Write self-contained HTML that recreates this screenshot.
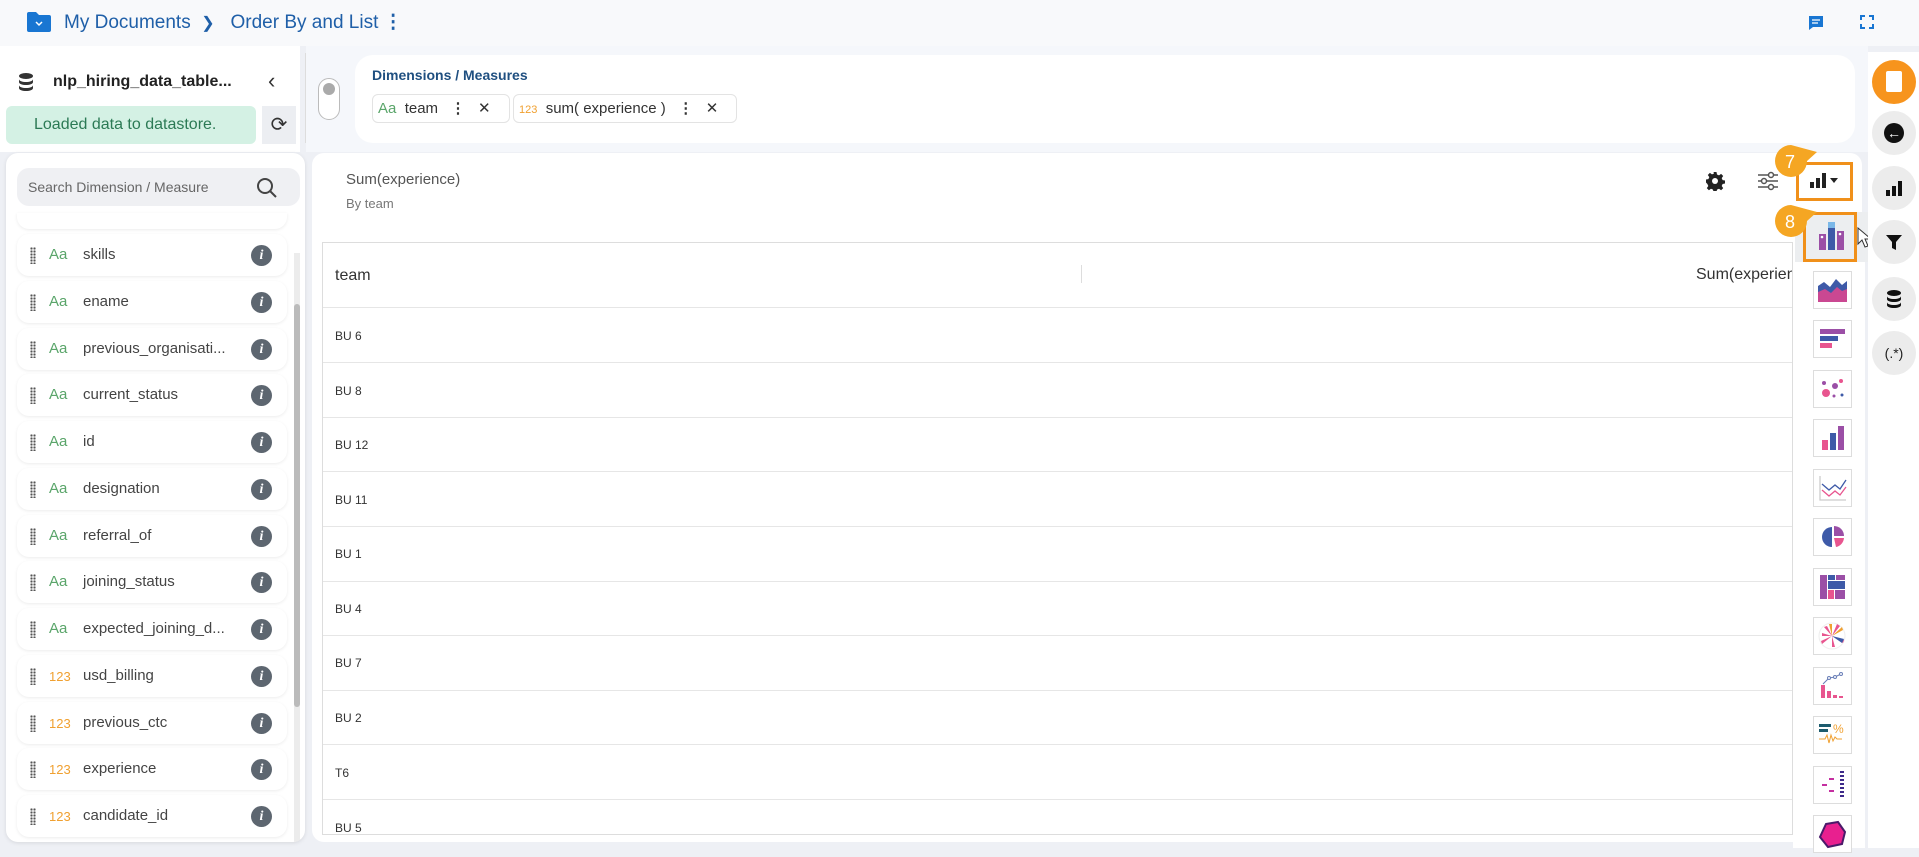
<!DOCTYPE html>
<html><head><meta charset="utf-8"><style>
*{box-sizing:border-box;margin:0;padding:0}
body{width:1919px;height:848px;overflow:hidden;background:#eef0f5;font-family:"Liberation Sans",sans-serif;position:relative;color:#333}
.abs{position:absolute}
.item{position:absolute;left:17px;width:270px;height:42px;background:#fff;border-radius:12px;box-shadow:0 1px 3px rgba(0,0,0,.08)}
.item .g{position:absolute;left:13px;top:13px;width:6px;height:17px;background:radial-gradient(circle,#555 1px,transparent 1.3px) 0 0/3px 3px}
.item .t{position:absolute;left:32px;top:12px;font-size:15px;color:#5aa56a}
.item .t.n{color:#f0a030;font-size:13px;top:14px}
.item .l{position:absolute;left:66px;top:12px;font-size:15px;color:#444}
.item .i{position:absolute;left:234px;top:11px;width:21px;height:21px;border-radius:50%;background:#5d6670;color:#fff;font:italic bold 14px "Liberation Serif",serif;text-align:center;line-height:21px}
.row{position:absolute;left:0;width:1471px;height:1px;background:#e6e6e6}
.rt{position:absolute;left:12px;font-size:12px;color:#333}
.ci{position:absolute;left:1813px;width:39px;height:38px;background:#fff;border:1px solid #ddd}
.rb{position:absolute;left:1872px;width:44px;height:44px;border-radius:50%;background:#ececec}
</style></head><body>
<div class="abs" style="left:0;top:0;width:1919px;height:46px;background:#f8f9fb"></div>
<svg class="abs" style="left:26px;top:11px" width="26" height="22"><path d="M1 3a2 2 0 0 1 2-2h7l3 3h10a2 2 0 0 1 2 2v13a2 2 0 0 1-2 2H3a2 2 0 0 1-2-2z" fill="#1976d2"/><path d="M10 11l3 3 3-3" stroke="#fff" stroke-width="1.5" fill="none"/></svg>
<div class="abs" style="left:64px;top:11px;font-size:19px;color:#1f5fa8">My Documents &nbsp;<span style="font-size:16px">&#10095;</span>&nbsp;&nbsp; Order By and List <b>&#8942;</b></div>
<svg class="abs" style="left:1807px;top:14px" width="18" height="18"><path d="M2 2h14v11H6l-4 3z" fill="#1976d2"/><path d="M5 6h8M5 9h6" stroke="#fff" stroke-width="1.3"/></svg>
<svg class="abs" style="left:1860px;top:15px" width="14" height="14" fill="none" stroke="#1976d2" stroke-width="2"><path d="M1 5V1h4M9 1h4v4M13 9v4H9M5 13H1V9"/></svg>
<div class="abs" style="left:0;top:46px;width:300px;height:106px;background:#fff"></div>
<svg class="abs" style="left:18px;top:72px" width="16" height="20"><ellipse cx="8" cy="4" rx="7" ry="3" fill="#333"/><path d="M1 7c0 4 14 4 14 0v3c0 4-14 4-14 0zM1 13c0 4 14 4 14 0v3c0 4-14 4-14 0z" fill="#333"/></svg>
<div class="abs" style="left:53px;top:73px;font-size:16px;font-weight:bold;color:#222">nlp_hiring_data_table...</div>
<div class="abs" style="left:268px;top:68px;font-size:22px;color:#333">&#8249;</div>
<div class="abs" style="left:6px;top:106px;width:250px;height:38px;background:#d4f1e4;border-radius:6px;color:#2c7a55;font-size:16px;line-height:38px;padding-left:28px">Loaded data to datastore.</div>
<div class="abs" style="left:262px;top:106px;width:34px;height:38px;background:#eceef2;font-size:20px;text-align:center;line-height:38px">&#10227;</div>
<div class="abs" style="left:305px;top:53px;width:1px;height:90px;background:#ddd"></div>
<div class="abs" style="left:306px;top:46px;width:1562px;height:106px;background:#f5f7fb"></div>
<div class="abs" style="left:318px;top:78px;width:22px;height:42px;border:1px solid #bbb;border-radius:11px;background:#fff"></div>
<div class="abs" style="left:323px;top:83px;width:12px;height:12px;border-radius:50%;background:#aaa"></div>
<div class="abs" style="left:355px;top:55px;width:1500px;height:88px;background:#fff;border-radius:18px"></div>
<div class="abs" style="left:372px;top:67px;font-size:14px;font-weight:bold;color:#1f4f80">Dimensions / Measures</div>
<div class="abs" style="left:372px;top:94px;width:138px;height:29px;border:1px solid #e3e3e3;border-radius:6px;font-size:15px;line-height:27px;padding-left:5px"><span style="color:#5aa56a">Aa</span>&nbsp; team &nbsp;&nbsp;<b>&#8942;</b>&nbsp;&nbsp; &#10005;</div>
<div class="abs" style="left:513px;top:94px;width:224px;height:29px;border:1px solid #e3e3e3;border-radius:6px;font-size:15px;line-height:27px;padding-left:5px"><span style="color:#f0a030;font-size:11px">123</span>&nbsp; sum( experience ) &nbsp;&nbsp;<b>&#8942;</b>&nbsp;&nbsp; &#10005;</div>
<div class="abs" style="left:6px;top:153px;width:299px;height:689px;background:#fff;border-radius:12px;box-shadow:0 1px 4px rgba(0,0,0,.1);overflow:hidden">
<div class="abs" style="left:11px;top:15px;width:283px;height:38px;background:#eff0f3;border-radius:12px;font-size:14px;color:#666;line-height:38px;padding-left:11px">Search Dimension / Measure</div>
<svg class="abs" style="left:250px;top:24px" width="22" height="22" fill="none" stroke="#444" stroke-width="2"><circle cx="9" cy="9" r="7"/><path d="M14 14l6 6"/></svg>
<div class="abs" style="left:288px;top:100px;width:6px;height:589px;background:#ececec"></div>
<div class="abs" style="left:288px;top:151px;width:6px;height:403px;background:#bbb;border-radius:3px"></div>
<div class="abs" style="left:11px;top:60px;width:270px;height:16px;background:#fff;border-radius:0 0 12px 12px;box-shadow:0 1px 3px rgba(0,0,0,.08)"></div>
</div>
<div class="item" style="top:234px"><i class="g"></i><span class="t">Aa</span><span class="l">skills</span><span class="i">i</span></div>
<div class="item" style="top:281px"><i class="g"></i><span class="t">Aa</span><span class="l">ename</span><span class="i">i</span></div>
<div class="item" style="top:328px"><i class="g"></i><span class="t">Aa</span><span class="l">previous_organisati...</span><span class="i">i</span></div>
<div class="item" style="top:374px"><i class="g"></i><span class="t">Aa</span><span class="l">current_status</span><span class="i">i</span></div>
<div class="item" style="top:421px"><i class="g"></i><span class="t">Aa</span><span class="l">id</span><span class="i">i</span></div>
<div class="item" style="top:468px"><i class="g"></i><span class="t">Aa</span><span class="l">designation</span><span class="i">i</span></div>
<div class="item" style="top:515px"><i class="g"></i><span class="t">Aa</span><span class="l">referral_of</span><span class="i">i</span></div>
<div class="item" style="top:561px"><i class="g"></i><span class="t">Aa</span><span class="l">joining_status</span><span class="i">i</span></div>
<div class="item" style="top:608px"><i class="g"></i><span class="t">Aa</span><span class="l">expected_joining_d...</span><span class="i">i</span></div>
<div class="item" style="top:655px"><i class="g"></i><span class="t n">123</span><span class="l">usd_billing</span><span class="i">i</span></div>
<div class="item" style="top:702px"><i class="g"></i><span class="t n">123</span><span class="l">previous_ctc</span><span class="i">i</span></div>
<div class="item" style="top:748px"><i class="g"></i><span class="t n">123</span><span class="l">experience</span><span class="i">i</span></div>
<div class="item" style="top:795px"><i class="g"></i><span class="t n">123</span><span class="l">candidate_id</span><span class="i">i</span></div>
<div class="abs" style="left:312px;top:153px;width:1550px;height:689px;background:#fff;border-radius:12px"></div>
<div class="abs" style="left:346px;top:171px;font-size:15px;color:#555">Sum(experience)</div>
<div class="abs" style="left:346px;top:196px;font-size:13px;color:#777">By team</div>
<svg class="abs" style="left:1705px;top:171px" width="20" height="20" viewBox="0 0 20 20"><path d="M8.5 1h3l.5 2.5 2 .9 2.1-1.5 2.1 2.1-1.5 2.1.9 2 2.4.4v3l-2.4.5-.9 2 1.5 2.1-2.1 2.1-2.1-1.5-2 .9-.5 2.4h-3l-.5-2.4-2-.9-2.1 1.5-2.1-2.1 1.5-2.1-.9-2L1 11.5v-3l2.4-.4.9-2-1.5-2.1 2.1-2.1 2.1 1.5 2-.9z" fill="#222"/><circle cx="10" cy="10" r="3" fill="#fff"/></svg>
<svg class="abs" style="left:1757px;top:171px" width="22" height="20" fill="none" stroke="#555" stroke-width="1.5"><path d="M1 4h20M1 10h20M1 16h20"/><circle cx="14" cy="4" r="2.5" fill="#fff"/><circle cx="7" cy="10" r="2.5" fill="#fff"/><circle cx="14" cy="16" r="2.5" fill="#fff"/></svg>
<div class="abs" style="left:1796px;top:162px;width:57px;height:39px;border:3px solid #f0901a;background:#fff"></div>
<svg class="abs" style="left:1810px;top:172px" width="32" height="18"><rect x="0" y="10" width="4" height="6" fill="#222"/><rect x="6" y="6" width="4" height="10" fill="#222"/><rect x="12" y="1" width="4" height="15" fill="#222"/><path d="M20 6h8l-4 5z" fill="#222"/></svg>
<div class="abs" style="left:322px;top:242px;width:1471px;height:593px;border:1px solid #ddd;overflow:hidden;background:#fff">
<div class="abs" style="left:12px;top:24px;font-size:16px;color:#333">team</div>
<div class="abs" style="left:758px;top:22px;width:1px;height:18px;background:#ddd"></div>
<div class="abs" style="left:1373px;top:23px;font-size:16px;color:#333;white-space:nowrap">Sum(experience)</div>
<div class="row" style="top:64px"></div>
<div class="rt" style="top:86px">BU 6</div><div class="row" style="top:119px"></div>
<div class="rt" style="top:141px">BU 8</div><div class="row" style="top:174px"></div>
<div class="rt" style="top:195px">BU 12</div><div class="row" style="top:228px"></div>
<div class="rt" style="top:250px">BU 11</div><div class="row" style="top:283px"></div>
<div class="rt" style="top:304px">BU 1</div><div class="row" style="top:338px"></div>
<div class="rt" style="top:359px">BU 4</div><div class="row" style="top:392px"></div>
<div class="rt" style="top:413px">BU 7</div><div class="row" style="top:447px"></div>
<div class="rt" style="top:468px">BU 2</div><div class="row" style="top:501px"></div>
<div class="rt" style="top:523px">T6</div><div class="row" style="top:556px"></div>
<div class="rt" style="top:578px">BU 5</div>
</div>
<div class="abs" style="left:1793px;top:215px;width:72px;height:633px;background:#fff"></div>
<div class="abs" style="left:1795px;top:212px;width:76px;height:50px;background:#eceef0"></div>
<div class="abs" style="left:1803px;top:212px;width:54px;height:50px;border:3px solid #f0901a"></div>
<svg class="abs" style="left:1818px;top:222px" width="28" height="30"><rect x="1" y="12" width="7" height="16" fill="#9b4fa6"/><rect x="10" y="4" width="7" height="24" fill="#3e5aa8"/><rect x="10" y="0" width="7" height="6" fill="#7bb8e8"/><rect x="19" y="9" width="7" height="19" fill="#9b4fa6"/><circle cx="4" cy="15" r="1.3" fill="#fff"/><circle cx="22" cy="12" r="1.3" fill="#fff"/></svg>
<div class="ci" style="top:271px"><svg width="37" height="36"><path d="M4 30V14l6-4 6 5 6-8 6 6 5-4v21z" fill="#3e5aa8"/><path d="M4 30V20l7-3 6 4 6-6 5 4 5-2v13z" fill="#d9468f" opacity=".9"/></svg></div>
<div class="ci" style="top:320px"><svg width="37" height="36"><rect x="6" y="8" width="25" height="5" fill="#9b4fa6"/><rect x="6" y="15" width="18" height="5" fill="#3e5aa8"/><rect x="6" y="22" width="12" height="5" fill="#e8558f"/></svg></div>
<div class="ci" style="top:370px"><svg width="37" height="36"><circle cx="12" cy="22" r="4" fill="#e8558f"/><circle cx="21" cy="15" r="3" fill="#9b4fa6"/><circle cx="10" cy="12" r="2" fill="#9b4fa6"/><circle cx="27" cy="10" r="2" fill="#e8558f"/><circle cx="28" cy="24" r="1.5" fill="#3e5aa8"/><circle cx="20" cy="25" r="1.5" fill="#9b4fa6"/></svg></div>
<div class="ci" style="top:419px"><svg width="37" height="36"><rect x="8" y="20" width="6" height="10" fill="#e8558f"/><rect x="16" y="13" width="6" height="17" fill="#3e5aa8"/><rect x="24" y="6" width="6" height="24" fill="#9b4fa6"/></svg></div>
<div class="ci" style="top:469px"><svg width="37" height="36" fill="none" stroke-width="1.3"><path d="M6 6v24h26" stroke="#ccc"/><path d="M8 14l7 6 6-5 5 4 6-9" stroke="#3e5aa8"/><path d="M8 20l7 6 6-5 5 4 6-8" stroke="#e8558f"/></svg></div>
<div class="ci" style="top:518px"><svg width="37" height="36"><path d="M18 8a10 10 0 1 0 0 20z" fill="#3e5aa8"/><path d="M20 7a10 10 0 0 1 10 10H20z" fill="#9b4fa6"/><path d="M20 19h10a10 10 0 0 1-8 9z" fill="#e8558f"/></svg></div>
<div class="ci" style="top:568px"><svg width="37" height="36"><rect x="6" y="6" width="7" height="24" fill="#9b4fa6"/><rect x="14" y="6" width="7" height="5" fill="#3e5aa8"/><rect x="22" y="6" width="9" height="5" fill="#9b4fa6"/><rect x="14" y="12" width="17" height="8" fill="#3e5aa8"/><rect x="14" y="21" width="6" height="9" fill="#e8558f"/><rect x="21" y="21" width="10" height="9" fill="#9b4fa6"/></svg></div>
<div class="ci" style="top:617px"><svg width="37" height="36"><circle cx="18" cy="18" r="13" fill="none" stroke="#eee"/><path d="M18 18l-8-9 3-1zM18 18l5-12 3 2zM18 18l12 4-1 3zM18 18l-11 5 1 3zM18 18l3 11-3 0zM18 18l-10-3 0 3z" fill="#e8558f"/><path d="M18 18l10-9 1 3zM18 18l-3-12 3 0z" fill="#f0a030"/><path d="M18 18l12 3 -2 4z" fill="#3e5aa8"/></svg></div>
<div class="ci" style="top:667px"><svg width="37" height="36"><rect x="7" y="17" width="4" height="13" fill="#e8558f"/><rect x="13" y="23" width="4" height="7" fill="#e8558f"/><rect x="19" y="27" width="4" height="3" fill="#e8558f"/><rect x="25" y="28" width="4" height="2" fill="#e8558f"/><path d="M9 16l6-6 6-1 6-3" stroke="#6a7fb8" fill="none"/><circle cx="15" cy="10" r="1.5" fill="#fff" stroke="#6a7fb8"/><circle cx="21" cy="9" r="1.5" fill="#fff" stroke="#6a7fb8"/><circle cx="27" cy="6" r="1.5" fill="#fff" stroke="#6a7fb8"/></svg></div>
<div class="ci" style="top:716px"><svg width="37" height="36"><rect x="5" y="7" width="12" height="3" fill="#1d5c6e"/><rect x="5" y="12" width="9" height="3" fill="#1d5c6e"/><text x="19" y="16" font-size="12" fill="#f0a030" font-family="Liberation Sans">%</text><path d="M5 22h6l2-4 2 8 2-8 2 6 2-4 2 2h5" stroke="#f0a030" fill="none"/></svg></div>
<div class="ci" style="top:766px"><svg width="37" height="36"><rect x="8" y="17" width="5" height="2" fill="#c42fa0"/><rect x="15" y="11" width="5" height="2" fill="#c42fa0"/><rect x="15" y="23" width="5" height="2" fill="#c42fa0"/><g fill="#3e2a8a"><rect x="26" y="4" width="4" height="2"/><rect x="26" y="8" width="4" height="2"/><rect x="26" y="12" width="4" height="2"/><rect x="26" y="16" width="4" height="2"/><rect x="26" y="20" width="4" height="2"/><rect x="26" y="24" width="4" height="2"/><rect x="26" y="28" width="4" height="2"/></g></svg></div>
<div class="ci" style="top:815px"><svg width="37" height="36"><path d="M12 8l12-2 7 10-3 12-14 3-8-10z" fill="#e8208f" stroke="#4a1a6a" stroke-width="2"/></svg></div>
<svg class="abs" style="left:1775px;top:144px" width="44" height="34"><path d="M16 1a16 16 0 1 0 16 16l10-9z" fill="#f5a623"/><text x="10" y="24" font-size="18" fill="#fff" font-family="Liberation Sans">7</text></svg>
<svg class="abs" style="left:1775px;top:204px" width="44" height="34"><path d="M16 1a16 16 0 1 0 16 16l10-9z" fill="#f5a623"/><text x="10" y="24" font-size="18" fill="#fff" font-family="Liberation Sans">8</text></svg>
<svg class="abs" style="left:1857px;top:227px" width="14" height="22"><path d="M1 1v16l4-4 3 7 3-1-3-7h6z" fill="#fff" stroke="#333"/></svg>
<div class="abs" style="left:1868px;top:52px;width:51px;height:796px;background:#fff"></div>
<div class="rb" style="top:60px;background:#f7941d"><div class="abs" style="left:14px;top:11px;width:16px;height:21px;background:#fff;border-radius:2px"></div></div>
<div class="rb" style="top:111px"><div class="abs" style="left:12px;top:12px;width:20px;height:20px;border-radius:50%;background:#111;color:#fff;font-size:14px;text-align:center;line-height:20px">&#8592;</div></div>
<div class="rb" style="top:166px"><svg style="position:absolute;left:13px;top:13px" width="18" height="18"><rect x="1" y="11" width="4" height="6" fill="#111"/><rect x="7" y="7" width="4" height="10" fill="#111"/><rect x="13" y="2" width="4" height="15" fill="#111"/></svg></div>
<div class="rb" style="top:220px"><svg style="position:absolute;left:13px;top:13px" width="18" height="18"><path d="M1 2h16l-6 7v8l-4-2V9z" fill="#111"/></svg></div>
<div class="rb" style="top:277px"><svg style="position:absolute;left:14px;top:12px" width="16" height="20"><ellipse cx="8" cy="4" rx="7" ry="3" fill="#111"/><path d="M1 7c0 4 14 4 14 0v3c0 4-14 4-14 0zM1 13c0 4 14 4 14 0v3c0 4-14 4-14 0z" fill="#111"/></svg></div>
<div class="rb" style="top:331px;font-size:14px;text-align:center;line-height:44px;color:#222">(.*)</div>
</body></html>
